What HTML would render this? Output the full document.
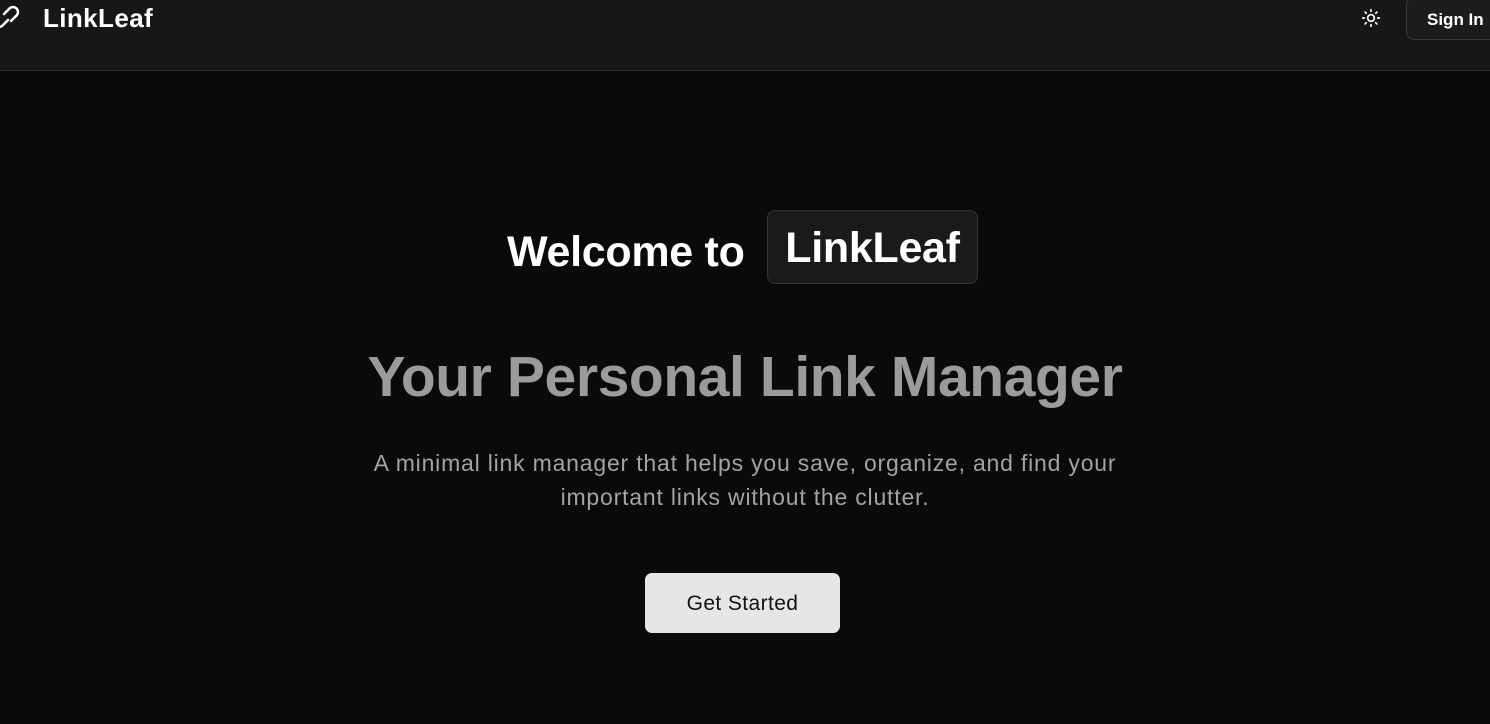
<!DOCTYPE html>
<html><head><style>
html,body{margin:0;padding:0;width:1490px;height:724px;overflow:hidden;background:#0a0a0a;font-family:"Liberation Sans",sans-serif;color:#fff}
.hdr{position:absolute;left:0;top:0;width:1490px;height:70px;background:#171717;border-bottom:1px solid #2b2b2b}
.logo{position:absolute;left:43px;top:3px;font-size:26px;font-weight:bold;letter-spacing:0.4px}
.signin{position:absolute;left:1406px;top:-4px;width:110px;height:44px;border:1px solid #3a3a3a;border-radius:9px;background:#1c1c1c;box-sizing:border-box}
.signin span{position:absolute;left:20px;top:13px;font-size:17px;font-weight:bold}
.w{position:absolute;top:228px;left:507px;font-size:43px;font-weight:bold;letter-spacing:-0.3px;line-height:48px}
.pill{position:absolute;left:767px;top:210px;width:211px;height:74px;box-sizing:border-box;background:#1a1a1a;border:1px solid #333;border-radius:8px;font-size:43px;font-weight:bold;text-align:center;line-height:74px;letter-spacing:-0.3px}
.h2{position:absolute;top:344px;width:1490px;text-align:center;font-size:57px;font-weight:bold;color:#9b9b9b;letter-spacing:-0.4px}
.p{position:absolute;top:446px;width:1490px;text-align:center;font-size:23px;line-height:34px;color:#a3a3a3;letter-spacing:0.8px}
.btn{position:absolute;left:645px;top:573px;width:195px;height:60px;background:#e6e6e6;border-radius:7px;color:#111;font-size:21px;text-align:center;line-height:62px;letter-spacing:0.4px}
</style></head><body>
<div class="hdr">
<svg style="position:absolute;left:-4px;top:0" width="28" height="36" viewBox="0 0 28 36" fill="none" stroke="#fff" stroke-width="2.5" stroke-linecap="round"><path d="M8 14 L14 8 a5 5 0 0 1 7 7 l-6 6"/><path d="M12 20 L6 26 a5 5 0 0 1 -7 -7"/></svg>
<div class="logo">LinkLeaf</div>
<svg style="position:absolute;left:1361px;top:8px" width="20" height="20" viewBox="0 0 24 24" fill="none" stroke="#fff" stroke-width="2" stroke-linecap="round"><circle cx="12" cy="12" r="4"/><path d="M12 2v2M12 20v2M4.9 4.9l1.4 1.4M17.7 17.7l1.4 1.4M2 12h2M20 12h2M4.9 19.1l1.4-1.4M17.7 6.3l1.4-1.4"/></svg>
<div class="signin"><span>Sign In</span></div>
</div>
<div class="w">Welcome to</div>
<div class="pill">LinkLeaf</div>
<div class="h2">Your Personal Link Manager</div>
<div class="p">A minimal link manager that helps you save, organize, and find your<br>important links without the clutter.</div>
<div class="btn">Get Started</div>
</body></html>
